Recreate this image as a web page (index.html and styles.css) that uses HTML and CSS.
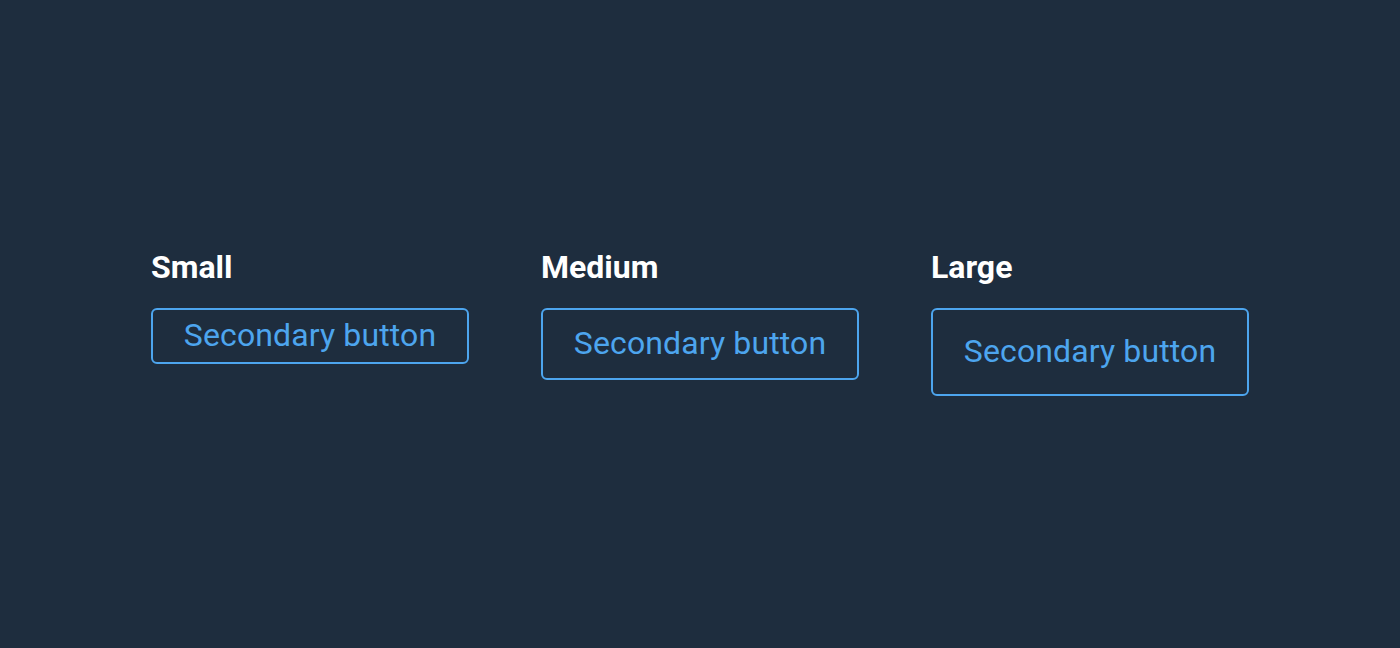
FILE: index.html
```html
<!DOCTYPE html>
<html lang="en">
<head>
<meta charset="utf-8">
<title>Secondary buttons</title>
<link rel="stylesheet" href="styles.css">
</head>
<body>
<main class="showcase">
  <section class="variant">
    <h2 class="variant-label">Small</h2>
    <button class="btn-secondary btn-small">Secondary button</button>
  </section>
  <section class="variant">
    <h2 class="variant-label">Medium</h2>
    <button class="btn-secondary btn-medium">Secondary button</button>
  </section>
  <section class="variant">
    <h2 class="variant-label">Large</h2>
    <button class="btn-secondary btn-large">Secondary button</button>
  </section>
</main>
</body>
</html>
```
FILE: styles.css
```css
html, body {
  margin: 0;
  padding: 0;
  height: 100%;
}
body {
  background: #1e2d3e;
  font-family: Roboto, "Liberation Sans", sans-serif;
}
.showcase {
  display: flex;
  justify-content: center;
  align-items: flex-start;
  gap: 72px;
  padding-top: 247px;
}
.variant {
  display: flex;
  flex-direction: column;
  align-items: flex-start;
  gap: 21px;
  width: 318px;
}
.variant-label {
  margin: 0;
  font-size: 32px;
  line-height: 40px;
  font-weight: 700;
  color: #ffffff;
}
.btn-secondary {
  box-sizing: border-box;
  width: 318px;
  background: transparent;
  border: 2px solid #4da5ee;
  border-radius: 6px;
  color: #4da5ee;
  font-family: Roboto, "Liberation Sans", sans-serif;
  font-size: 32px;
  line-height: 36px;
  font-weight: 400;
  letter-spacing: 0.12px;
  text-align: center;
  padding: 0 0 2px 0;
  cursor: pointer;
}
.btn-small { height: 56px; }
.btn-medium { height: 72px; }
.btn-large { height: 88px; }
```
